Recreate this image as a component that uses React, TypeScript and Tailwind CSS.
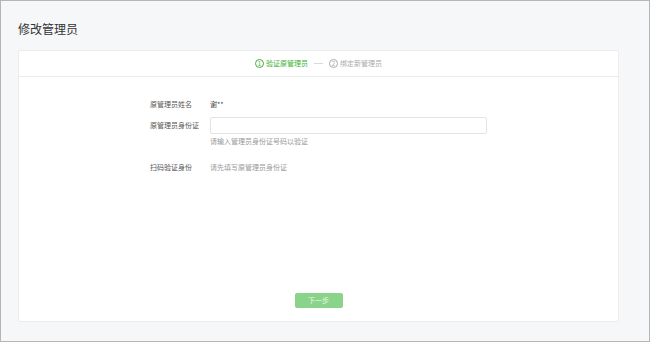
export default function App() {
  return (
    <div
      className="w-[650px] h-[342px] bg-[#f6f7f9] border border-[#b5b5b5] flex flex-col pl-[17px] pr-[30px] pt-[19px] pb-[19px]"
      style={{ fontFamily: '"Noto Sans CJK SC", "Noto Sans", sans-serif' }}
    >
      {/* Title */}
      <h1 className="text-[12px] leading-[18px] text-[#333] h-[18px]">修改管理员</h1>

      {/* Card */}
      <div className="mt-[12px] flex-1 bg-white border border-[#ececec] rounded-[2px] flex flex-col">
        {/* Steps */}
        <div className="h-[26px] border-b border-[#ececec] flex items-center justify-center gap-[6px] text-[7px]">
          <div className="flex items-center gap-[2px] text-[#3cb035]">
            <span className="w-[9px] h-[9px] rounded-full border border-[#3cb035] flex items-center justify-center text-[6px] leading-none">1</span>
            <span>验证原管理员</span>
          </div>
          <div className="w-[9px] h-px bg-[#d8d8d8]" />
          <div className="flex items-center gap-[2px] text-[#aaa]">
            <span className="w-[9px] h-[9px] rounded-full border border-[#aaa] flex items-center justify-center text-[6px] leading-none">2</span>
            <span>绑定新管理员</span>
          </div>
        </div>

        {/* Form */}
        <div className="flex-1 flex flex-col pt-[20px] text-[7px] text-[#555]">
          <div className="pl-[131px] flex items-center h-[14px]">
            <span className="w-[60px]">原管理员姓名</span>
            <span className="text-[#444]">谢**</span>
          </div>
          <div className="pl-[131px] flex items-center mt-[6px] h-[17px]">
            <span className="w-[60px]">原管理员身份证</span>
            <div className="w-[277px] h-[17px] border border-[#e3e3e3] rounded-[2px]" />
          </div>
          <div className="pl-[191px] mt-[1px] text-[#999] h-[12px] flex items-center">请输入管理员身份证号码以验证</div>
          <div className="pl-[131px] flex items-center mt-[13px] h-[14px]">
            <span className="w-[60px]">扫码验证身份</span>
            <span className="text-[#999]">请先填写原管理员身份证</span>
          </div>
          <div className="flex-1" />
          <div className="flex justify-center mb-[13px]">
            <button className="w-[48px] h-[15px] bg-[#89d48a] rounded-[2px] text-[7px] text-[#e8f7e8]">下一步</button>
          </div>
        </div>
      </div>
    </div>
  )
}
